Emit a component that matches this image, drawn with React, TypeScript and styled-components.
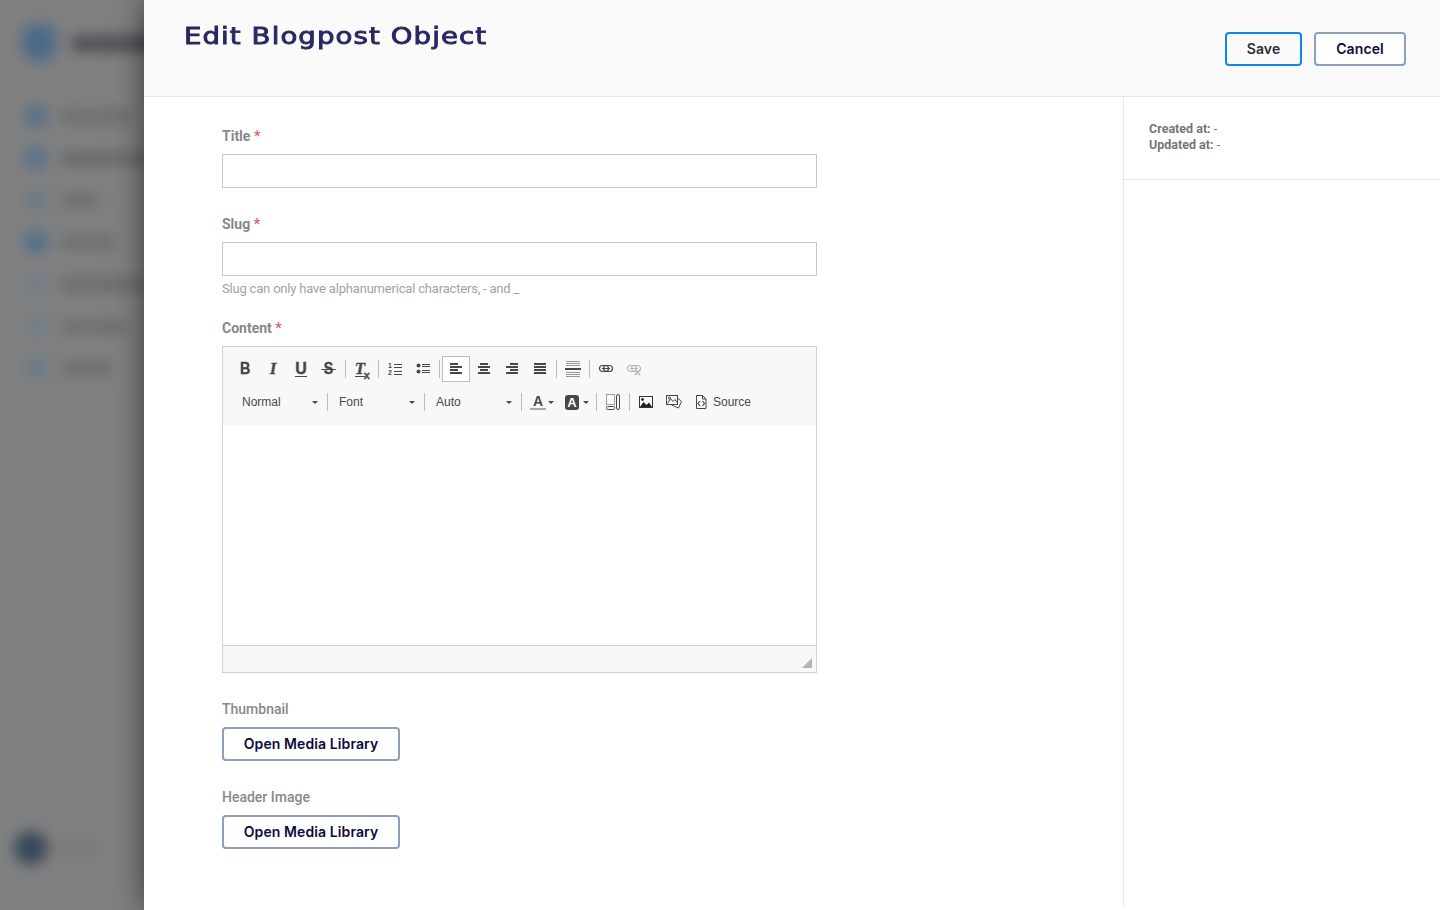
import React from "react";
import styled, { createGlobalStyle } from "styled-components";

const GlobalStyle = createGlobalStyle`
  html, body {
    margin: 0;
    padding: 0;
    background: #808080;
  }
  * {
    box-sizing: border-box;
  }
`;

const Page = styled.div`
  display: flex;
  width: 1440px;
  height: 910px;
  overflow: hidden;
  font-family: Roboto, "Liberation Sans", sans-serif;
`;

/* blurred nav behind the drawer */
const Sidebar = styled.div`
  width: 144px;
  flex-shrink: 0;
  overflow: hidden;
  background: #808080;
`;

const SidebarInner = styled.div`
  display: flex;
  flex-direction: column;
  width: 260px;
  height: 910px;
  padding: 24px 0 45px 0;
  filter: blur(7px);
`;

const LogoRow = styled.div`
  display: flex;
  align-items: center;
  gap: 16px;
  padding-left: 22px;
  margin-bottom: 33px;
`;

const LogoMark = styled.div`
  width: 34px;
  height: 38px;
  border-radius: 10px 10px 16px 16px;
  background: #4a6a88;
`;

const LogoText = styled.div`
  width: 120px;
  height: 15px;
  background: #4b4b52;
`;

const NavItem = styled.div`
  display: flex;
  align-items: center;
  gap: 14px;
  height: 42px;
  padding-left: 25px;
`;

const NavIcon = styled.div<{ $tone: string }>`
  width: 22px;
  height: 20px;
  border-radius: 5px;
  background: ${props => props.$tone};
`;

const NavText = styled.div<{ $width: number; $shade?: string }>`
  width: ${props => props.$width}px;
  height: 11px;
  background: ${props => props.$shade || "#6a6a6a"};
`;

const UserRow = styled.div`
  display: flex;
  align-items: center;
  gap: 12px;
  margin-top: auto;
  padding-left: 14px;
`;

const Avatar = styled.div`
  width: 34px;
  height: 34px;
  border-radius: 50%;
  background: #38485a;
`;

const UserName = styled.div`
  width: 36px;
  height: 8px;
  background: #727272;
`;

const Drawer = styled.div`
  flex: 1;
  display: flex;
  flex-direction: column;
  padding-bottom: 3px;
  background: #fff;
  box-shadow: 0 0 28px rgba(0, 0, 0, 0.55);
  z-index: 1;
`;

const Header = styled.header`
  display: flex;
  justify-content: space-between;
  height: 97px;
  flex-shrink: 0;
  padding: 0 34px 0 40px;
  background: #fafafa;
  border-bottom: 1px solid #e8e8e8;
`;

const PageTitle = styled.h1`
  margin: 21px 0 0;
  font-family: "DejaVu Sans", sans-serif;
  font-size: 23px;
  line-height: 30px;
  font-weight: 400;
  letter-spacing: 0.9px;
  color: #2a2860;
  -webkit-text-stroke: 0.9px #2a2860;
  transform: scaleX(1.2);
  transform-origin: left center;
`;

const HeaderActions = styled.div`
  display: flex;
  gap: 12px;
  padding-top: 32px;
`;

const Button = styled.button<{ $primary?: boolean; $width: number }>`
  width: ${props => props.$width}px;
  height: 34px;
  padding: 0 0 2px;
  border: 2px solid ${props => (props.$primary ? "#0d86f2" : "#8aa0bc")};
  border-radius: 4px;
  background: ${props => (props.$primary ? "#fafafa" : "#fff")};
  color: ${props => (props.$primary ? "#2d2d33" : "#0c0a3e")};
  font-family: Inter, "Liberation Sans", sans-serif;
  font-size: 14px;
  font-weight: 600;
  letter-spacing: 0.1px;
`;

const Body = styled.div`
  flex: 1;
  display: flex;
  min-height: 0;
`;

const Main = styled.main`
  flex: 1;
  padding: 29px 0 0 78px;
`;

const Field = styled.div`
  width: 595px;
  margin-bottom: 26px;
`;

const Label = styled.label<{ $light?: boolean }>`
  display: block;
  margin-bottom: 8px;
  font-size: 14px;
  line-height: 20px;
  font-weight: ${props => (props.$light ? 500 : 700)};
  color: #888;
`;

const Required = styled.span`
  color: #e06464;
`;

const TextInput = styled.input`
  display: block;
  width: 100%;
  height: 34px;
  border: 1px solid #c9c9c9;
  background: #fff;
`;

const Help = styled.div`
  margin: 5px 0 -5px;
  font-size: 13px;
  line-height: 16px;
  letter-spacing: -0.19px;
  color: #a2a2a2;
`;

const Editor = styled.div`
  display: flex;
  flex-direction: column;
  height: 327px;
  border: 1px solid #d1d1d1;
`;

const Toolbar = styled.div`
  height: 78px;
  flex-shrink: 0;
  padding: 9px 0 0 8px;
  background: #f8f8f8;
`;

const ToolRow = styled.div<{ $top?: number }>`
  display: flex;
  align-items: center;
  height: 26px;
  margin-top: ${props => props.$top || 0}px;
`;

const ToolButton = styled.div<{ $active?: boolean; $faded?: boolean }>`
  display: flex;
  align-items: center;
  justify-content: center;
  flex-shrink: 0;
  width: 28px;
  height: 26px;
  border: 1px solid ${props => (props.$active ? "#bcbcbc" : "transparent")};
  background: ${props => (props.$active ? "#fff" : "transparent")};
  color: #474747;
  opacity: ${props => (props.$faded ? 0.35 : 1)};
`;

const Separator = styled.span<{ $tight?: boolean }>`
  flex-shrink: 0;
  width: 1px;
  height: 18px;
  margin: ${props => (props.$tight ? "0" : "0 2px")};
  background: #bcbcbc;
`;

const Combo = styled.div`
  display: flex;
  align-items: center;
  justify-content: space-between;
  width: 96px;
  padding: 0 9px 0 11px;
  font-family: "Liberation Sans", Arial, sans-serif;
  font-size: 12px;
  color: #484848;
`;

const Caret = styled.span`
  width: 0;
  height: 0;
  border-left: 3px solid transparent;
  border-right: 3px solid transparent;
  border-top: 3px solid #484848;
`;

const ColorButton = styled.div<{ $inset: number; $gap: number }>`
  display: flex;
  align-items: center;
  gap: ${props => props.$gap}px;
  width: 36px;
  height: 26px;
  padding-left: ${props => props.$inset}px;
`;

const SourceLabel = styled.span`
  margin-left: -3px;
  font-family: "Liberation Sans", Arial, sans-serif;
  font-size: 12px;
  color: #484848;
`;

const SansGlyph = styled.span`
  display: inline-block;
  font-family: "Liberation Sans", Arial, sans-serif;
  font-size: 17px;
  line-height: 16px;
  font-weight: 700;
  color: #474747;
  -webkit-text-stroke: 0.4px #474747;
  transform: scaleX(0.85);
`;

const UnderlineGlyph = styled(SansGlyph)`
  font-size: 16px;
  line-height: 13px;
  padding-bottom: 1px;
  border-bottom: 1px solid #474747;
  transform: none;
`;

const StrikeGlyph = styled(SansGlyph)`
  position: relative;
  font-size: 17px;

  &::after {
    content: "";
    position: absolute;
    left: -3px;
    right: -3px;
    top: 8px;
    height: 1px;
    background: #474747;
  }
`;

const SlabGlyph = styled.span`
  display: inline-block;
  font-family: "Liberation Serif", "Times New Roman", serif;
  font-size: 17px;
  line-height: 16px;
  font-weight: 700;
  font-style: italic;
  color: #474747;
  -webkit-text-stroke: 0.3px #474747;
`;

const ClearGlyph = styled(SlabGlyph)`
  position: relative;
  margin-right: 4px;
  line-height: 14px;
  border-bottom: 1px solid #474747;
`;

const SubX = styled.span`
  position: absolute;
  left: 9px;
  top: 6px;
  font-family: "Liberation Sans", Arial, sans-serif;
  font-size: 11px;
  font-style: normal;
  font-weight: 700;
`;

const ColorA = styled.span`
  display: block;
  width: 16px;
  height: 16px;
  border-bottom: 2px solid #a9a9a9;
  font-family: "Liberation Sans", Arial, sans-serif;
  font-size: 14px;
  line-height: 14px;
  font-weight: 700;
  text-align: center;
  color: #474747;
`;

const FilledA = styled.span`
  display: block;
  width: 14px;
  height: 15px;
  border-radius: 3px;
  background: #474747;
  font-family: "Liberation Sans", Arial, sans-serif;
  font-size: 13px;
  line-height: 15px;
  font-weight: 700;
  text-align: center;
  color: #fff;
`;

const EditArea = styled.div`
  flex: 1;
  background: #fff;
`;

const EditorFooter = styled.div`
  display: flex;
  justify-content: flex-end;
  align-items: flex-end;
  height: 27px;
  flex-shrink: 0;
  padding: 0 4px 4px 0;
  background: #f8f8f8;
  border-top: 1px solid #d1d1d1;
`;

const ResizeGrip = styled.span`
  width: 10px;
  height: 10px;
  background: #b4b4b4;
  clip-path: polygon(100% 0, 100% 100%, 0 100%);
`;

const Aside = styled.aside`
  width: 317px;
  flex-shrink: 0;
  border-left: 1px solid #e8e8e8;
`;

const MetaBlock = styled.div`
  height: 83px;
  padding: 24px 25px 0;
  border-bottom: 1px solid #e8e8e8;
  font-size: 12.5px;
  line-height: 16px;
  color: #777;
`;

const MetaKey = styled.b`
  font-weight: 700;
`;

const Icon = ({ children }: { children: React.ReactNode }) => (
  <svg width="16" height="16" viewBox="0 0 16 16" fill="#474747" shapeRendering="crispEdges">
    {children}
  </svg>
);

const AlignIcon = ({ bars }: { bars: [number, number][] }) => (
  <Icon>
    {bars.map(([x, w], i) => (
      <rect key={i} x={x} y={2 + i * 3} width={w} height="2" />
    ))}
  </Icon>
);

const OrderedIcon = () => (
  <Icon>
    <text x="1" y="7" fontSize="7" fontWeight="700" fontFamily="Liberation Sans" fill="#474747">1</text>
    <text x="1" y="14" fontSize="7" fontWeight="700" fontFamily="Liberation Sans" fill="#474747">2</text>
    <rect x="7" y="3" width="8" height="1" />
    <rect x="7" y="6" width="8" height="1" />
    <rect x="7" y="10" width="8" height="1" />
    <rect x="7" y="13" width="8" height="1" />
  </Icon>
);

const BulletIcon = () => (
  <Icon>
    <circle cx="3.5" cy="4.5" r="2" shapeRendering="auto" />
    <circle cx="3.5" cy="10.5" r="2" shapeRendering="auto" />
    <rect x="7" y="3" width="8" height="1" />
    <rect x="7" y="5" width="8" height="1" />
    <rect x="7" y="9" width="8" height="1" />
    <rect x="7" y="11" width="8" height="1" />
  </Icon>
);

const RuleIcon = () => (
  <Icon>
    <rect x="1" y="0" width="14" height="1" fill="#9a9a9a" />
    <rect x="1" y="2" width="14" height="1" fill="#9a9a9a" />
    <rect x="1" y="4" width="14" height="1" fill="#9a9a9a" />
    <rect x="0" y="7" width="16" height="2" />
    <rect x="1" y="11" width="14" height="1" fill="#9a9a9a" />
    <rect x="1" y="13" width="14" height="1" fill="#9a9a9a" />
    <rect x="1" y="15" width="14" height="1" fill="#9a9a9a" />
  </Icon>
);

const LinkIcon = ({ broken }: { broken?: boolean }) => (
  <svg width="16" height="16" viewBox="0 0 16 16" fill="none" stroke="#474747">
    <rect x="1.5" y="4.5" width="9" height="6" rx="3" strokeWidth="1.2" />
    <rect x="5.5" y="4.5" width="9" height="6" rx="3" strokeWidth="1.2" />
    <path d="M4 7.5h8" strokeWidth="1" />
    {broken && <path d="M9 9l5 5M14 9l-5 5" strokeWidth="1.6" />}
  </svg>
);

const BlocksIcon = () => (
  <svg width="16" height="16" viewBox="0 0 16 16" fill="none" stroke="#474747">
    <rect x="1.5" y="0.5" width="8" height="10" strokeDasharray="1 1" />
    <rect x="1.5" y="12.5" width="8" height="3" rx="1" />
    <rect x="11.5" y="0.5" width="3" height="15" rx="1.5" />
  </svg>
);

const ImageIcon = () => (
  <svg width="16" height="16" viewBox="0 0 16 16">
    <rect x="1.5" y="2.5" width="13" height="11" fill="#fff" stroke="#333" />
    <path d="M2 13l3.5-5 3 3 2.5-2.5 3 4.5z" fill="#222" />
    <circle cx="4.5" cy="5.5" r="1.4" fill="#222" />
  </svg>
);

const GalleryIcon = () => (
  <svg width="16" height="16" viewBox="0 0 16 16" fill="none" stroke="#474747">
    <rect x="0.5" y="1.5" width="11" height="9" />
    <path d="M11.5 4l4 3.5-3 6.5-7-3" />
    <path d="M1.5 9.5l3-5 2.5 3 2-2 2 3" />
    <circle cx="3.5" cy="4" r="1" />
  </svg>
);

const SourceIcon = () => (
  <svg width="16" height="16" viewBox="0 0 16 16" fill="none" stroke="#474747">
    <path d="M2.5 1.5h6l3.5 3.5v9.5h-9.5z" />
    <path d="M8.5 1.5v3.5h3.5" />
    <path d="M6 7l-2 2.5 2 2.5M8.5 7l2 2.5-2 2.5" strokeWidth="1.2" />
  </svg>
);

const sideItems = [
  { tone: "#567189", width: 72 },
  { tone: "#567189", width: 90, shade: "#646464" },
  { tone: "#6c7a87", width: 36 },
  { tone: "#4f6e8b", width: 54 },
  { tone: "#727d87", width: 90, shade: "#666" },
  { tone: "#727d87", width: 66 },
  { tone: "#6c7a87", width: 50 },
];

export default function App() {
  return (
    <Page>
      <GlobalStyle />
      <Sidebar>
        <SidebarInner>
          <LogoRow>
            <LogoMark />
            <LogoText />
          </LogoRow>
          {sideItems.map((item, i) => (
            <NavItem key={i}>
              <NavIcon $tone={item.tone} />
              <NavText $width={item.width} $shade={item.shade} />
            </NavItem>
          ))}
          <UserRow>
            <Avatar />
            <UserName />
          </UserRow>
        </SidebarInner>
      </Sidebar>

      <Drawer>
        <Header>
          <PageTitle>Edit Blogpost Object</PageTitle>
          <HeaderActions>
            <Button $primary $width={77}>Save</Button>
            <Button $width={92}>Cancel</Button>
          </HeaderActions>
        </Header>

        <Body>
          <Main>
            <Field>
              <Label>Title <Required>*</Required></Label>
              <TextInput />
            </Field>
            <Field>
              <Label>Slug <Required>*</Required></Label>
              <TextInput />
              <Help>Slug can only have alphanumerical characters, - and _</Help>
            </Field>
            <Field>
              <Label>Content <Required>*</Required></Label>
              <Editor>
                <Toolbar>
                  <ToolRow>
                    <ToolButton><SansGlyph>B</SansGlyph></ToolButton>
                    <ToolButton><SlabGlyph>I</SlabGlyph></ToolButton>
                    <ToolButton><UnderlineGlyph>U</UnderlineGlyph></ToolButton>
                    <ToolButton><StrikeGlyph>S</StrikeGlyph></ToolButton>
                    <Separator />
                    <ToolButton><ClearGlyph>T<SubX>x</SubX></ClearGlyph></ToolButton>
                    <Separator />
                    <ToolButton><OrderedIcon /></ToolButton>
                    <ToolButton><BulletIcon /></ToolButton>
                    <Separator />
                    <ToolButton $active><AlignIcon bars={[[2, 8], [2, 12], [2, 8], [2, 12]]} /></ToolButton>
                    <ToolButton><AlignIcon bars={[[4, 8], [2, 12], [4, 8], [2, 12]]} /></ToolButton>
                    <ToolButton><AlignIcon bars={[[6, 8], [2, 12], [6, 8], [2, 12]]} /></ToolButton>
                    <ToolButton><AlignIcon bars={[[2, 12], [2, 12], [2, 12], [2, 12]]} /></ToolButton>
                    <Separator />
                    <ToolButton><RuleIcon /></ToolButton>
                    <Separator />
                    <ToolButton><LinkIcon /></ToolButton>
                    <ToolButton $faded><LinkIcon broken /></ToolButton>
                  </ToolRow>
                  <ToolRow $top={7}>
                    <Combo>Normal<Caret /></Combo>
                    <Separator $tight />
                    <Combo>Font<Caret /></Combo>
                    <Separator $tight />
                    <Combo>Auto<Caret /></Combo>
                    <Separator $tight />
                    <ColorButton $inset={8} $gap={2}><ColorA>A</ColorA><Caret /></ColorButton>
                    <ColorButton $inset={7} $gap={4}><FilledA>A</FilledA><Caret /></ColorButton>
                    <Separator />
                    <ToolButton><BlocksIcon /></ToolButton>
                    <Separator />
                    <ToolButton><ImageIcon /></ToolButton>
                    <ToolButton><GalleryIcon /></ToolButton>
                    <ToolButton><SourceIcon /></ToolButton>
                    <SourceLabel>Source</SourceLabel>
                  </ToolRow>
                </Toolbar>
                <EditArea />
                <EditorFooter><ResizeGrip /></EditorFooter>
              </Editor>
            </Field>
            <Field>
              <Label $light>Thumbnail</Label>
              <Button $width={178}>Open Media Library</Button>
            </Field>
            <Field>
              <Label $light>Header Image</Label>
              <Button $width={178}>Open Media Library</Button>
            </Field>
          </Main>
          <Aside>
            <MetaBlock>
              <div><MetaKey>Created at:</MetaKey> -</div>
              <div><MetaKey>Updated at:</MetaKey> -</div>
            </MetaBlock>
          </Aside>
        </Body>
      </Drawer>
    </Page>
  );
}
